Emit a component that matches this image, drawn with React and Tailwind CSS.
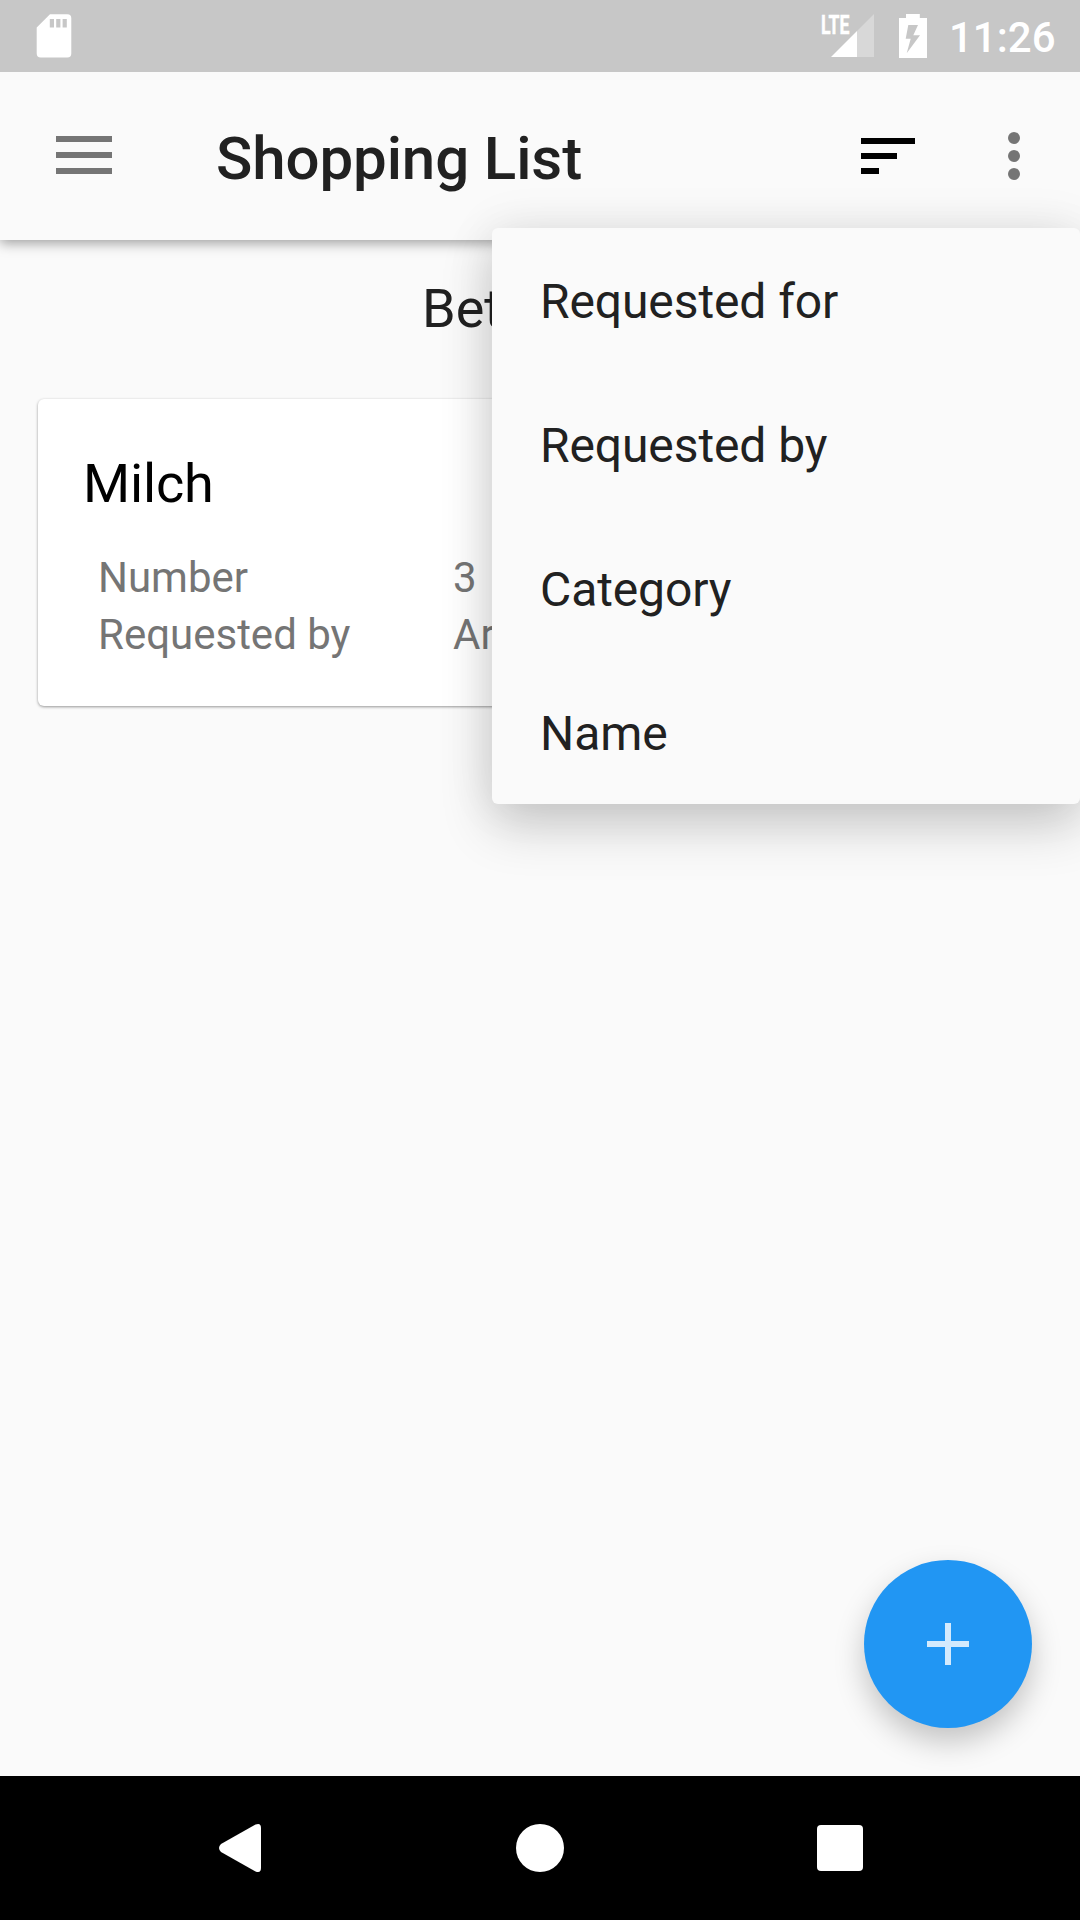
const menuItems = ["Requested for", "Requested by", "Category", "Name"];

const details = [
  { label: "Number", value: "3" },
  { label: "Requested by", value: "Ar" },
];

function StatusBar() {
  return (
    <div className="relative z-10 flex h-[72px] items-center bg-[#c7c7c7] pl-9 pr-[25px] text-white">
      <svg className="h-[44px] w-[36px]" viewBox="36 14 36 44" fill="currentColor">
        <path
          fillRule="evenodd"
          d="M50 14.3H67.3Q71.3 14.3 71.3 18.3V53.5Q71.3 57.5 67.3 57.5H40.7Q36.7 57.5 36.7 53.5V27.5ZM49.8 19V27.5H54V19ZM56.2 19V27.5H60.4V19ZM62.6 19V27.5H66.8V19Z"
        />
      </svg>
      <svg className="ml-auto h-[58px] w-[56px]" viewBox="820 7 56 58" fill="currentColor">
        <text
          x="821"
          y="33.6"
          fontFamily="Roboto, sans-serif"
          fontWeight="700"
          fontSize="26"
          textLength="28.5"
          lengthAdjust="spacingAndGlyphs"
          stroke="currentColor"
          strokeWidth="0.5"
        >
          LTE
        </text>
        <path d="M874 14V57H857V31Z" fillOpacity="0.3" />
        <path d="M857 31V57H831Z" />
      </svg>
      <svg className="ml-[23px] h-[46px] w-[28px]" viewBox="899 13 28 46" fill="currentColor">
        <path
          fillRule="evenodd"
          d="M906 14H919.8V18H927V58H899V18H906ZM908.3 25L905.7 38.7H910.7L906.7 53.3L920 35.3H913.3L918 25Z"
        />
      </svg>
      <span className="ml-[22px] mt-[3px] w-[106px] whitespace-nowrap text-[42px] font-medium leading-[69px]">
        11:26
      </span>
    </div>
  );
}

function Toolbar() {
  return (
    <header className="relative flex h-[168px] items-center bg-[#fafafa] pl-14 pr-[60px] text-[#212121] shadow-[0_3px_12px_rgba(0,0,0,0.38)]">
      <svg className="-mt-[2px] h-[38px] w-[56px]" viewBox="0 0 56 38" fill="#757575">
        <path d="M0 0H56V6H0ZM0 16H56V22H0ZM0 32H56V38H0Z" />
      </svg>
      <h1 className="ml-[104px] mt-[6px] text-[60px] font-medium leading-[72px] tracking-[-0.1px]">
        Shopping List
      </h1>
      <svg className="ml-auto h-[36px] w-[54px]" viewBox="0 0 54 36">
        <path d="M0 0H54V6H0ZM0 15H36V21H0ZM0 30H18V36H0Z" />
      </svg>
      <svg className="ml-[93px] h-[48px] w-[12px]" viewBox="0 0 12 48" fill="#757575">
        <circle cx="6" cy="6" r="6" />
        <circle cx="6" cy="24" r="6" />
        <circle cx="6" cy="42" r="6" />
      </svg>
    </header>
  );
}

function ItemCard() {
  return (
    <section className="mx-[38px] mt-[56px] h-[307px] rounded-[6px] bg-white pl-[45px] pt-[52px] shadow-[0_1px_3px_rgba(0,0,0,0.4)]">
      <h2 className="text-[54px] leading-[66px] tracking-[-0.15px] text-black">Milch</h2>
      <dl className="ml-[15px] mt-[32px] text-[42px] leading-[57px] text-[#757575]">
        {details.map((d) => (
          <div key={d.label} className="flex">
            <dt className="w-[355px]">{d.label}</dt>
            <dd>{d.value}</dd>
          </div>
        ))}
      </dl>
    </section>
  );
}

function SortMenu() {
  return (
    <ul className="absolute right-0 top-[228px] z-20 w-[588px] rounded-[6px] bg-[#fafafa] text-[48px] tracking-[-0.1px] text-[#212121] shadow-[0_22px_52px_rgba(0,0,0,0.19),0_0_50px_rgba(0,0,0,0.08)]">
      {menuItems.map((item) => (
        <li key={item} className="flex h-[144px] items-center pl-12 pt-[3px]">
          {item}
        </li>
      ))}
    </ul>
  );
}

function NavBar() {
  return (
    <nav className="flex h-[144px] items-center justify-between bg-black pl-[219px] pr-[217px] text-white">
      <svg className="h-[48px] w-[42px]" viewBox="0 0 42 48" fill="currentColor">
        <path d="M36.5 .6Q42 -1.5 42 4V44Q42 49.5 36.5 47.4L2 28Q-2 24 2 20Z" />
      </svg>
      <div className="ml-[2px] size-12 rounded-full bg-white" />
      <div className="h-[46px] w-[46px] rounded-[4px] bg-white" />
    </nav>
  );
}

export default function App() {
  return (
    <div className="relative flex h-[1920px] w-[1080px] flex-col overflow-hidden bg-[#fafafa] font-['Roboto',sans-serif]">
      <StatusBar />
      <Toolbar />
      <main className="flex-1">
        <p className="pl-[422px] pt-[35px] text-[54px] leading-[68px] text-[#212121]">Bet</p>
        <ItemCard />
      </main>
      <button
        aria-label="Add item"
        className="absolute bottom-[192px] right-12 flex size-[168px] items-center justify-center rounded-full bg-[#2196f3] shadow-[0_14px_30px_rgba(0,0,0,0.22)]"
      >
        <svg className="size-[42px]" viewBox="0 0 42 42" fill="#d3eafd">
          <path d="M18 0H24V18H42V24H24V42H18V24H0V18H18Z" />
        </svg>
      </button>
      <NavBar />
      <SortMenu />
    </div>
  );
}
